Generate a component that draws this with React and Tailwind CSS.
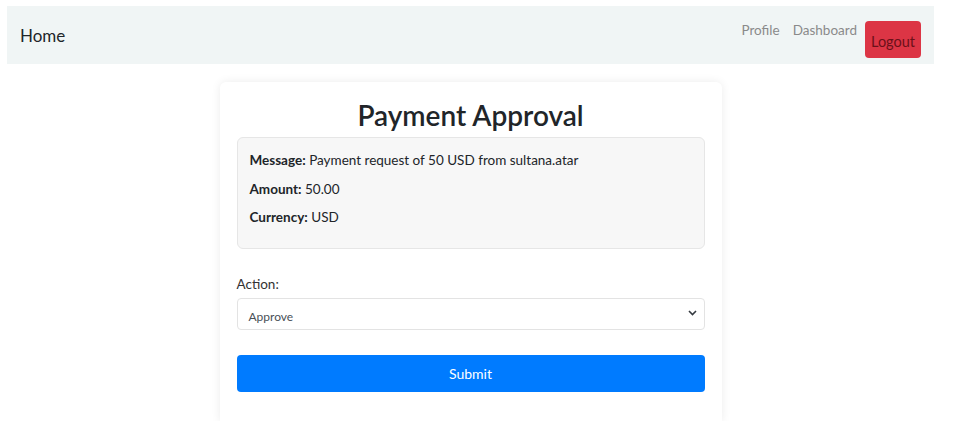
export default function App() {
  return (
    <div className="min-h-[421px] bg-white pl-[7px] pt-[6px] font-['Lato','Noto_Sans',sans-serif] text-[#212529]">
      <div className="w-[927px]">
        {/* Navbar */}
        <nav className="flex h-[58px] items-start justify-between bg-[#f0f5f5] pl-[13px] pr-[13px]">
          <a className="mt-[19px] text-[17px] leading-[22px] text-[#212529]">Home</a>
          <div className="flex items-start pt-[15px]">
            <a className="text-[13.5px] leading-[18px] text-[#8a8a8a]">Profile</a>
            <a className="ml-[13px] text-[13.5px] leading-[18px] text-[#8a8a8a]">Dashboard</a>
            <button className="ml-[8px] h-[37px] w-[56px] rounded-[4px] bg-[#dc3545] pt-[4px] text-[14.5px] leading-[18px] text-[#6b1019]">
              Logout
            </button>
          </div>
        </nav>

        {/* Card */}
        <div className="mx-auto mt-[18px] h-[340px] w-[502px] rounded-t-[6px] bg-white px-[17px] pt-[14px] shadow-[0_0_10px_rgba(0,0,0,0.08)]">
          <h1 className="text-center text-[28px] font-semibold leading-[38px] text-[#212529]">Payment Approval</h1>

          <div className="mt-[3px] h-[112px] rounded-[6px] border border-[#e6e6e6] bg-[#f7f7f7] px-[12px] pt-[12px] text-[13.5px] leading-[20px]">
            <p>
              <strong>Message:</strong> Payment request of 50 USD from sultana.atar
            </p>
            <p className="mt-[9px]">
              <strong>Amount:</strong> 50.00
            </p>
            <p className="mt-[8px]">
              <strong>Currency:</strong> USD
            </p>
          </div>

          <label className="mt-[25px] block text-[13.5px] leading-[20px] text-[#333]">Action:</label>
          <div className="relative mt-[4px] flex h-[32px] items-center rounded-[4px] border border-[#e3e3e3] bg-white pl-[11px]">
            <span className="pt-[6px] text-[12px] text-[#495057]">Approve</span>
            <svg className="absolute right-[7px] top-[11px]" width="9" height="6" viewBox="0 0 9 6">
              <path d="M1 1l3.5 3.5L8 1" fill="none" stroke="#343a40" strokeWidth="1.6" />
            </svg>
          </div>

          <button className="mt-[25px] h-[37px] w-full rounded-[4px] bg-[#007bff] text-[14px] text-white">Submit</button>
        </div>
      </div>
    </div>
  );
}
